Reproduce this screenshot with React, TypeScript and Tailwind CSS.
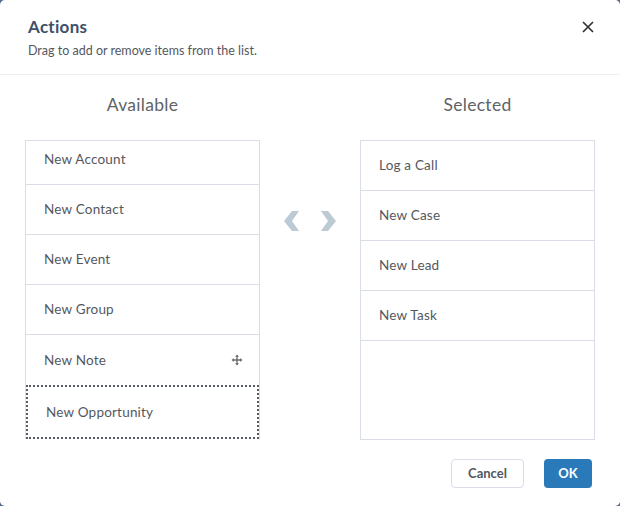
import React from "react";

const font = { fontFamily: '"Lato", "Open Sans", "Liberation Sans", sans-serif' };

function Row({ label, last, icon }: { label: string; last?: boolean; icon?: boolean }) {
  return (
    <div className={`flex h-[50px] items-center justify-between pl-[18px] pr-[16px] text-[13.5px] text-[#54585e] ${last ? "" : "border-b border-[#d8dde6]"}`}>
      <span className="tracking-[0.2px]">{label}</span>
      {icon && (
        <svg width="12" height="12" viewBox="0 0 12 12" className="text-[#6b6d70]">
          <path d="M6 0.5 L8 2.8 H6.7 V5.3 H9.2 V4 L11.5 6 L9.2 8 V6.7 H6.7 V9.2 H8 L6 11.5 L4 9.2 H5.3 V6.7 H2.8 V8 L0.5 6 L2.8 4 V5.3 H5.3 V2.8 H4 Z" fill="currentColor" />
        </svg>
      )}
    </div>
  );
}

export default function App() {
  return (
    <div className="h-[506px] w-[620px] bg-[#54698d]" style={font}>
      <div className="flex h-full w-full flex-col rounded-[5px] bg-white">
        <div className="flex h-[75px] flex-col border-b border-[#eef0f3] px-[28px]">
          <div className="flex items-start justify-between pt-[15px]">
            <h1 className="text-[17px] font-bold leading-[24px] tracking-[0.3px] text-[#3e4f68]">Actions</h1>
            <svg width="12" height="12" viewBox="0 0 12 12" className="mt-[6px] -mr-[2px]">
              <path d="M1 1 L11 11 M11 1 L1 11" stroke="#333" strokeWidth="1.7" />
            </svg>
          </div>
          <p className="mt-[4px] text-[12.5px] leading-[16px] text-[#54585e]">Drag to add or remove items from the list.</p>
        </div>

        <div className="flex px-[25px] pt-[20px]">
          <div className="flex w-[235px] flex-col">
            <div className="h-[45px] text-center text-[17.5px] leading-[20px] tracking-[0.3px] text-[#5f6367]">Available</div>
            <div className="h-[299px] overflow-hidden border-l border-r border-t border-[#d8dde6]">
              <div className="-mt-[6px]">
                <Row label="New Account" />
                <Row label="New Contact" />
                <Row label="New Event" />
                <Row label="New Group" />
                <Row label="New Note" icon last />
                <div className="flex h-[54px] items-center border-2 border-dotted border-[#555c66] pl-[18px] text-[13.5px] tracking-[0.2px] text-[#54585e]">
                  New Opportunity
                </div>
              </div>
            </div>
          </div>

          <div className="flex w-[100px] items-start justify-center gap-[22px] pt-[116px]">
            <svg width="15" height="20" viewBox="0 0 15 20">
              <path d="M15 0 L8 0 L0 10 L8 20 L15 20 L8 10 Z" fill="#bccad4" />
            </svg>
            <svg width="15" height="20" viewBox="0 0 15 20">
              <path d="M0 0 L7 0 L15 10 L7 20 L0 20 L7 10 Z" fill="#bccad4" />
            </svg>
          </div>

          <div className="flex w-[235px] flex-col">
            <div className="h-[45px] text-center text-[17.5px] leading-[20px] tracking-[0.3px] text-[#5f6367]">Selected</div>
            <div className="h-[300px] border border-[#d8dde6]">
              <Row label="Log a Call" />
              <Row label="New Case" />
              <Row label="New Lead" />
              <Row label="New Task" />
            </div>
          </div>
        </div>

        <div className="flex justify-end gap-[20px] px-[28px] pt-[19px]">
          <button className="h-[29px] w-[73px] rounded-[4px] border border-[#d8dde6] bg-white text-[13px] font-bold text-[#54585e]">Cancel</button>
          <button className="h-[29px] w-[48px] rounded-[4px] bg-[#2a7ab9] text-[13px] font-bold text-white">OK</button>
        </div>
      </div>
    </div>
  );
}
